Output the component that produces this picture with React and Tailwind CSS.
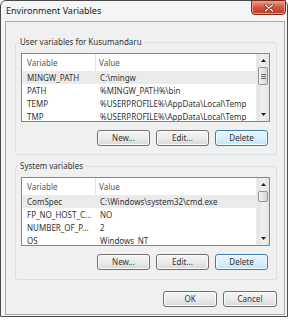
import React from "react";

function Btn({ children, primary }) {
  return (
    <div
      className={
        primary
          ? "w-[53px] h-[16px] rounded-[3px] border border-[#3c7fb1] bg-linear-to-b from-[#eaf6fd] via-[#d9f0fc] to-[#bee6fd] shadow-[inset_0_0_0_1px_#f4fbfe] flex items-center justify-center text-[#333]"
          : "w-[53px] h-[16px] rounded-[3px] border border-[#707070] bg-linear-to-b from-[#f4f4f4] via-[#ebebeb] to-[#d8d8d8] shadow-[inset_0_0_0_1px_#fbfbfb] flex items-center justify-center text-[#333]"
      }
    >
      {children}
    </div>
  );
}

function Arrow({ up }) {
  return (
    <div className="h-[13px] flex items-center justify-center shrink-0">
      <svg width="5" height="3" viewBox="0 0 5 3">
        {up ? <path d="M2.5 0 L5 3 L0 3 Z" fill="#222" /> : <path d="M0 0 L5 0 L2.5 3 Z" fill="#222" />}
      </svg>
    </div>
  );
}

function ScrollBar({ thumb }) {
  return (
    <div className="w-[13px] shrink-0 flex flex-col bg-linear-to-r from-[#e3e3e3] via-[#f0f0f0] to-[#e3e3e3] border-l border-[#ececec]">
      <Arrow up />
      <div
        className={
          thumb === "big"
            ? "h-[18px] mx-[1px] rounded-[2px] border border-[#959595] bg-linear-to-r from-[#f3f3f3] to-[#d6d6d6] flex flex-col items-center justify-center gap-[1px]"
            : "h-[11px] mx-[1px] rounded-[2px] border border-[#959595] bg-linear-to-r from-[#f3f3f3] to-[#d6d6d6]"
        }
      >
        {thumb === "big" && (
          <>
            <div className="w-[5px] h-[1px] bg-[#6a6a6a]" />
            <div className="w-[5px] h-[1px] bg-[#6a6a6a]" />
            <div className="w-[5px] h-[1px] bg-[#6a6a6a]" />
          </>
        )}
      </div>
      <div className="flex-1" />
      <Arrow />
    </div>
  );
}

function ListView({ rows, thumb }) {
  return (
    <div className="flex h-[69px] border border-[#828790] bg-white overflow-hidden">
      <div className="flex-1 min-w-0 flex flex-col">
        <div className="flex h-[17px] shrink-0 items-stretch text-[#555]">
          <div className="w-[74px] border-r border-[#e2e2e2] pl-[5px] flex items-center">Variable</div>
          <div className="pl-[3px] flex items-center">Value</div>
        </div>
        {rows.map((r, i) => (
          <div
            key={i}
            className={
              i === 0
                ? "flex h-[13px] shrink-0 items-center bg-[#ebebeb]"
                : "flex h-[13px] shrink-0 items-center"
            }
          >
            <div className="w-[75px] shrink-0 pl-[5px] whitespace-nowrap overflow-hidden">{r[0]}</div>
            <div className="pl-[3px] whitespace-nowrap">{r[1]}</div>
          </div>
        ))}
      </div>
      <ScrollBar thumb={thumb} />
    </div>
  );
}

function Group({ title, rows, thumb, className, pb }) {
  return (
    <fieldset className={"border border-[#d5dfe5] rounded-[3px] p-0 m-0 min-w-0 " + className}>
      <legend className="ml-[2px] px-[2px] leading-[12px] text-[#333]">{title}</legend>
      <div className={"pl-[5px] pr-[6px] pt-[5px] " + pb}>
        <ListView rows={rows} thumb={thumb} />
        <div className="flex justify-end gap-[6px] mt-[8px] pr-[2px]">
          <Btn>New...</Btn>
          <Btn>Edit...</Btn>
          <Btn primary>Delete</Btn>
        </div>
      </div>
    </fieldset>
  );
}

export default function App() {
  const userRows = [
    ["MINGW_PATH", "C:\\mingw"],
    ["PATH", "%MINGW_PATH%\\bin"],
    ["TEMP", "%USERPROFILE%\\AppData\\Local\\Temp"],
    ["TMP", "%USERPROFILE%\\AppData\\Local\\Temp"],
  ];
  const sysRows = [
    ["ComSpec", "C:\\Windows\\system32\\cmd.exe"],
    ["FP_NO_HOST_C...", "NO"],
    ["NUMBER_OF_P...", "2"],
    ["OS", "Windows_NT"],
  ];
  return (
    <div className="w-[290px] h-[320px] bg-white font-['Noto_Sans','DejaVu_Sans',sans-serif] text-[8px] text-[#333]">
      <div className="w-[288px] h-[317px] border border-[#4a4a4a] rounded-t-[6px] bg-[#f4f5f7] flex flex-col">
        <div className="h-[20px] shrink-0 flex items-start">
          <div className="pl-[5px] pt-[4px] text-[9px] leading-[12px] text-[#1a1a1a]">Environment Variables</div>
          <div className="ml-auto mr-[1px] -mt-[1px] w-[35px] h-[15px] rounded-b-[4px] border border-[#7a2a1e] bg-linear-to-b from-[#eba08e] via-[#d0533b] to-[#bf3f28] shadow-[inset_0_0_0_1px_#eb9a86] flex items-center justify-center">
            <svg width="10" height="8" viewBox="0 0 10 8">
              <path d="M1.5 1 L8.5 7 M8.5 1 L1.5 7" stroke="#5a1a10" strokeWidth="2.6" strokeLinecap="round" />
              <path d="M1.5 1 L8.5 7 M8.5 1 L1.5 7" stroke="#ffffff" strokeWidth="1.5" strokeLinecap="round" />
            </svg>
          </div>
        </div>
        <div className="ml-[4px] w-[280px] h-[294px] border border-[#a8a8a8] bg-[#f0f0f0] pl-[9px] pr-[7px] pt-[14px] flex flex-col">
          <Group title="User variables for Kusumandaru" rows={userRows} thumb="big" className="" pb="pb-[8px]" />
          <Group title="System variables" rows={sysRows} thumb="small" className="mt-[5px]" pb="pb-[9px]" />
          <div className="flex justify-end gap-[6px] mt-[11px]">
            <div className="w-[54px] h-[16px] rounded-[3px] border border-[#707070] bg-linear-to-b from-[#f4f4f4] via-[#ebebeb] to-[#d8d8d8] shadow-[inset_0_0_0_1px_#fbfbfb] flex items-center justify-center">OK</div>
            <div className="w-[54px] h-[16px] rounded-[3px] border border-[#707070] bg-linear-to-b from-[#f4f4f4] via-[#ebebeb] to-[#d8d8d8] shadow-[inset_0_0_0_1px_#fbfbfb] flex items-center justify-center">Cancel</div>
          </div>
        </div>
      </div>
    </div>
  );
}
